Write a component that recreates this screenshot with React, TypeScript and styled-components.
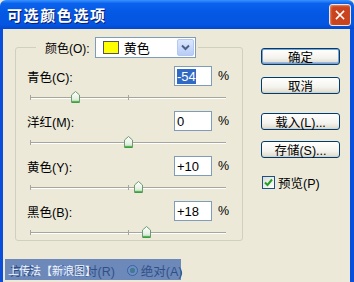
import React from 'react';
import styled, { createGlobalStyle } from 'styled-components';

const Global = createGlobalStyle`
  html, body { margin: 0; padding: 0; background: #ECE9D8; }
  body {
    width: 354px; height: 282px; overflow: hidden;
    font-family: "Liberation Sans", "Noto Sans CJK SC", sans-serif;
    font-size: 12px; color: #000;
  }
`;

const Window = styled.div`
  position: relative;
  width: 354px;
  height: 282px;
  display: flex;
  flex-direction: column;
  background: #ECE9D8;
  overflow: hidden;
`;

const TitleBar = styled.div`
  height: 29px;
  flex: none;
  display: flex;
  align-items: center;
  justify-content: space-between;
  padding: 0 3px 0 7px;
  background: linear-gradient(#3A93FF 0%, #0A62EC 12%, #0458E4 45%, #0455E2 85%, #0348D0 100%);
  border-radius: 6px 6px 0 0;
`;

const Title = styled.div`
  color: #fff;
  font-family: "Noto Sans CJK SC", sans-serif;
  font-weight: 700;
  font-size: 15px;
  letter-spacing: 1.6px;
  text-shadow: 1px 1px 0 #0A1E6E;
`;

const CloseButton = styled.div`
  width: 22px;
  height: 22px;
  box-sizing: border-box;
  border: 1px solid #E8E8E8;
  border-radius: 3px;
  background: #C8431E;
  box-shadow: inset 1px 1px 2px #E88A68;
  display: flex;
  align-items: center;
  justify-content: center;
`;

const Frame = styled.div`
  flex: 1;
  display: flex;
  flex-direction: column;
  border-left: 3px solid #0A4FDB;
  border-right: 4px solid #0A4FDB;
`;

const Content = styled.div`
  display: flex;
  align-items: flex-start;
  padding: 8px 0 0 12px;
`;

const Group = styled.fieldset`
  width: 228px;
  height: 204px;
  box-sizing: border-box;
  margin: 0;
  padding: 0 11px 0 11px;
  border: 1px solid #D0D0BF;
  border-radius: 3px;
  display: flex;
  flex-direction: column;
`;

const Legend = styled.legend`
  margin-left: 9px;
  padding: 0 2px 0 9px;
  display: flex;
  align-items: center;
  gap: 5px;
`;

const Combo = styled.div`
  width: 101px;
  height: 21px;
  box-sizing: border-box;
  border: 1px solid #7F9DB9;
  background: #fff;
  display: flex;
  align-items: center;
  padding: 1px 1px 1px 7px;
`;

const Swatch = styled.div`
  width: 16px;
  height: 13px;
  box-sizing: border-box;
  border: 1px solid #555;
  background: #FFFF00;
  margin-right: 5px;
`;

const ComboText = styled.span`
  flex: 1;
  font-size: 13px;
`;

const ComboArrow = styled.div`
  width: 17px;
  height: 17px;
  border-radius: 2px;
  background: linear-gradient(#DCE7FD, #B7CCF6);
  border: 1px solid #B4C8F2;
  box-sizing: border-box;
  display: flex;
  align-items: center;
  justify-content: center;
`;

const Params = styled.div`
  display: flex;
  flex-direction: column;
  padding-top: 8px;
`;

const ParamRow = styled.div`
  display: flex;
  align-items: center;
  height: 20px;
`;

const Label = styled.span`
  flex: 1;
  font-size: 12.5px;
`;

const ValueBox = styled.div`
  width: 38px;
  height: 20px;
  box-sizing: border-box;
  border: 1px solid #7F9DB9;
  background: #fff;
  display: flex;
  align-items: center;
  padding-left: 2px;
  font-size: 13px;
`;

const Selected = styled.span`
  background: #316AC5;
  color: #fff;
  line-height: 15px;
`;

const Percent = styled.span`
  width: 13px;
  margin-left: 6px;
  font-size: 12.5px;
`;

const SliderArea = styled.div`
  position: relative;
  height: 25px;
  margin-left: 3px;
  width: 196px;
`;

const Track = styled.div`
  position: absolute;
  left: 0;
  right: 0;
  top: 11px;
  height: 0;
  border-top: 1px solid #A6A59E;
  border-bottom: 1px solid #FFFFFF;
`;

const Tick = styled.div`
  position: absolute;
  top: 9px;
  width: 1px;
  height: 5px;
  background: #A6A59E;
`;

const Thumb = styled.div`
  position: absolute;
  top: 5px;
  width: 9px;
  height: 12px;
  margin-left: -4px;
  display: flex;
`;

const Buttons = styled.div`
  display: flex;
  flex-direction: column;
  margin-left: 18px;
  padding-top: 11px;
`;

const Button = styled.div<{ $default?: boolean; $gap?: number }>`
  width: 79px;
  height: 17px;
  box-sizing: border-box;
  margin-top: ${p => p.$gap ?? 0}px;
  border: 1px solid #003C74;
  border-radius: 3px;
  background: linear-gradient(#FFFFFF 0%, #F4F3EE 60%, #DCD8C8 100%);
  box-shadow: ${p => (p.$default ? 'inset 0 0 0 1px #7DA2CE, inset 0 -1px 0 1px #9BB7E0' : 'inset 0 -1px 0 #D6D0C5')};
  display: flex;
  align-items: center;
  justify-content: center;
  font-size: 12.5px;
`;

const CheckRow = styled.div`
  display: flex;
  align-items: center;
  gap: 3px;
  margin-top: 15px;
  margin-left: 1px;
  font-size: 12.5px;
`;

const CheckBox = styled.div`
  width: 13px;
  height: 13px;
  box-sizing: border-box;
  border: 1px solid #1C5180;
  background: linear-gradient(135deg, #DCDCD7, #FFFFFF);
  display: flex;
  align-items: center;
  justify-content: center;
`;

const MethodRow = styled.div`
  display: flex;
  align-items: center;
  height: 22px;
  margin-top: 18px;
  padding-left: 7px;
  font-size: 12.5px;
`;

const RadioGroup = styled.div<{ $gap: number }>`
  display: flex;
  align-items: center;
  gap: 3px;
  margin-left: ${p => p.$gap}px;
`;

const Radio = styled.div<{ $on?: boolean }>`
  width: 11px;
  height: 11px;
  box-sizing: border-box;
  border-radius: 50%;
  border: 1px solid #1C5180;
  background: ${p => (p.$on ? 'radial-gradient(circle, #3BB33B 0 2.5px, #fff 3px)' : '#fff')};
`;

const Watermark = styled.div`
  position: absolute;
  left: 5px;
  top: 259px;
  width: 176px;
  height: 21px;
  background: rgba(66, 104, 176, 0.75);
  color: #F2F6FF;
  display: flex;
  align-items: center;
  padding-left: 3px;
  box-sizing: border-box;
  font-family: "Noto Sans CJK SC", sans-serif;
  font-size: 11px;
`;

const params = [
  { label: '青色(C):', value: '-54', selected: true, v: -54 },
  { label: '洋红(M):', value: '0', v: 0 },
  { label: '黄色(Y):', value: '+10', v: 10 },
  { label: '黑色(B):', value: '+18', v: 18 },
];

const ThumbIcon = () => (
  <svg viewBox="0 0 9 12" width="9" height="12">
    <defs>
      <linearGradient id="tg" x1="0" y1="0" x2="0" y2="1">
        <stop offset="0" stopColor="#FFFFFF" />
        <stop offset="0.7" stopColor="#E4F0E2" />
        <stop offset="1" stopColor="#8FCB8B" />
      </linearGradient>
    </defs>
    <polygon points="0.5,4 4.5,0.5 8.5,4 8.5,11.5 0.5,11.5" fill="url(#tg)" stroke="#6E9A74" strokeWidth="1" />
    <line x1="1" y1="11" x2="8" y2="11" stroke="#21A121" strokeWidth="1.2" />
  </svg>
);

export default function App() {
  return (
    <>
      <Global />
      <Window>
        <TitleBar>
          <Title>可选颜色选项</Title>
          <CloseButton>
            <svg width="10" height="10" viewBox="0 0 10 10">
              <path d="M1.5 1.5 L8.5 8.5 M8.5 1.5 L1.5 8.5" stroke="#fff" strokeWidth="1.6" strokeLinecap="square" />
            </svg>
          </CloseButton>
        </TitleBar>
        <Frame>
          <Content>
            <Group>
              <Legend>
                <span>颜色(O):</span>
                <Combo>
                  <Swatch />
                  <ComboText>黄色</ComboText>
                  <ComboArrow>
                    <svg width="9" height="7" viewBox="0 0 9 7">
                      <path d="M1 1.5 L4.5 5 L8 1.5" stroke="#4D6185" strokeWidth="2" fill="none" />
                    </svg>
                  </ComboArrow>
                </Combo>
              </Legend>
              <Params>
                {params.map(p => (
                  <div key={p.label}>
                    <ParamRow>
                      <Label>{p.label}</Label>
                      <ValueBox>{p.selected ? <Selected>{p.value}</Selected> : p.value}</ValueBox>
                      <Percent>%</Percent>
                    </ParamRow>
                    <SliderArea>
                      <Track />
                      <Tick style={{ left: 0 }} />
                      <Tick style={{ left: 98 }} />
                      <Thumb style={{ left: 98 + (p.v / 100) * 98 }}>
                        <ThumbIcon />
                      </Thumb>
                    </SliderArea>
                  </div>
                ))}
              </Params>
            </Group>
            <Buttons>
              <Button $default>确定</Button>
              <Button $gap={12}>取消</Button>
              <Button $gap={19}>载入(L)...</Button>
              <Button $gap={11}>存储(S)...</Button>
              <CheckRow>
                <CheckBox>
                  <svg width="9" height="9" viewBox="0 0 9 9">
                    <path d="M1 4.5 L3.5 7 L8 1.5" stroke="#21A121" strokeWidth="2" fill="none" />
                  </svg>
                </CheckBox>
                <span>预览(P)</span>
              </CheckRow>
            </Buttons>
          </Content>
          <MethodRow>
            <span>方法:</span>
            <RadioGroup $gap={20}>
              <Radio />
              <span>相对(R)</span>
            </RadioGroup>
            <RadioGroup $gap={12}>
              <Radio $on />
              <span>绝对(A)</span>
            </RadioGroup>
          </MethodRow>
        </Frame>
        <Watermark>上传法【新浪图】</Watermark>
      </Window>
    </>
  );
}
